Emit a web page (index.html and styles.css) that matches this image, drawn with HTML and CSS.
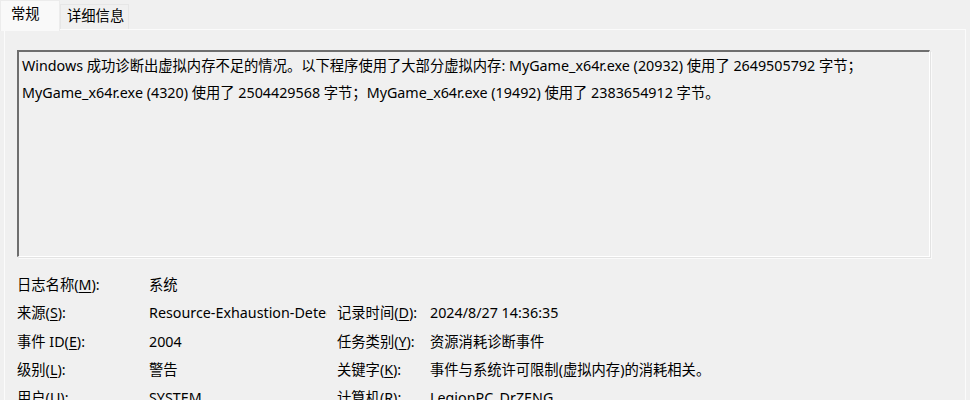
FILE: index.html
```html
<!DOCTYPE html>
<html lang="zh-CN">
<head>
<meta charset="utf-8">
<link rel="stylesheet" href="styles.css">
</head>
<body>
<div class="tabs">
  <div class="tab active">常规</div>
  <div class="tab">详细信息</div>
</div>
<div class="panel">
  <div class="desc">Windows 成功诊断出虚拟内存不足的情况。以下程序使用了大部分虚拟内存: MyGame_x64r.exe (20932) 使用了 2649505792 字节；MyGame_x64r.exe (4320) 使用了 2504429568 字节；MyGame_x64r.exe (19492) 使用了 2383654912 字节。</div>
  <div class="props">
    <div class="lbl">日志名称(<u>M</u>):</div><div class="val">系统</div><div class="lbl2"></div><div class="val"></div>
    <div class="lbl">来源(<u>S</u>):</div><div class="val">Resource-Exhaustion-Detector</div><div class="lbl2">记录时间(<u>D</u>):</div><div class="val">2024/8/27 14:36:35</div>
    <div class="lbl">事件 ID(<u>E</u>):</div><div class="val">2004</div><div class="lbl2">任务类别(<u>Y</u>):</div><div class="val">资源消耗诊断事件</div>
    <div class="lbl">级别(<u>L</u>):</div><div class="val">警告</div><div class="lbl2">关键字(<u>K</u>):</div><div class="val">事件与系统许可限制(虚拟内存)的消耗相关。</div>
    <div class="lbl">用户(<u>U</u>):</div><div class="val">SYSTEM</div><div class="lbl2">计算机(<u>R</u>):</div><div class="val">LegionPC_DrZENG</div>
  </div>
</div>
</body>
</html>
```

FILE: styles.css
```css
html, body {
  margin: 0;
  padding: 0;
  background: #f0f0f0;
  height: 400px;
  overflow: hidden;
}
body {
  font-family: "Noto Sans", "Noto Sans CJK SC", sans-serif;
  font-size: 14.3px;
  color: #000;
}
.tabs {
  display: flex;
  align-items: flex-end;
  height: 30px;
}
.tab {
  height: 24px;
  line-height: 22px;
  padding: 0 4px 0 6px;
  background: #f0f0f0;
  border: 1px solid #e6e6e6;
  border-bottom: none;
  margin-bottom: 1px;
}
.tab.active {
  height: 30px;
  line-height: 26px;
  padding: 0 10px;
  width: 38px;
  background: #f9f9f9;
  border-color: #ececec;
  margin-bottom: -1px;
  position: relative;
  z-index: 1;
}
.panel {
  margin: -1px 4px 0 4px;
  border: 1px solid #fbfbfb;
  border-bottom: none;
  height: 380px;
  padding: 20px 0 0 12px;
}
.desc {
  width: 903px;
  height: 204px;
  border-top: 2px solid #6e6e6e;
  border-left: 2px solid #6e6e6e;
  border-right: 1px solid #ffffff;
  border-bottom: 1px solid #ffffff;
  box-shadow: 1px 1px 0 #e3e3e3, 2px 2px 0 #fafafa;
  padding: 0 4px 0 3px;
  line-height: 27px;
}
.props {
  display: grid;
  grid-template-columns: 132px 178px 103px 1fr;
  grid-auto-rows: 28.3px;
  margin-top: 14px;
  line-height: 28px;
}
.lbl, .val, .lbl2 {
  white-space: nowrap;
  overflow: hidden;
}
.lbl2 {
  padding-left: 10px;
}
u {
  text-underline-offset: 2px;
}
```
